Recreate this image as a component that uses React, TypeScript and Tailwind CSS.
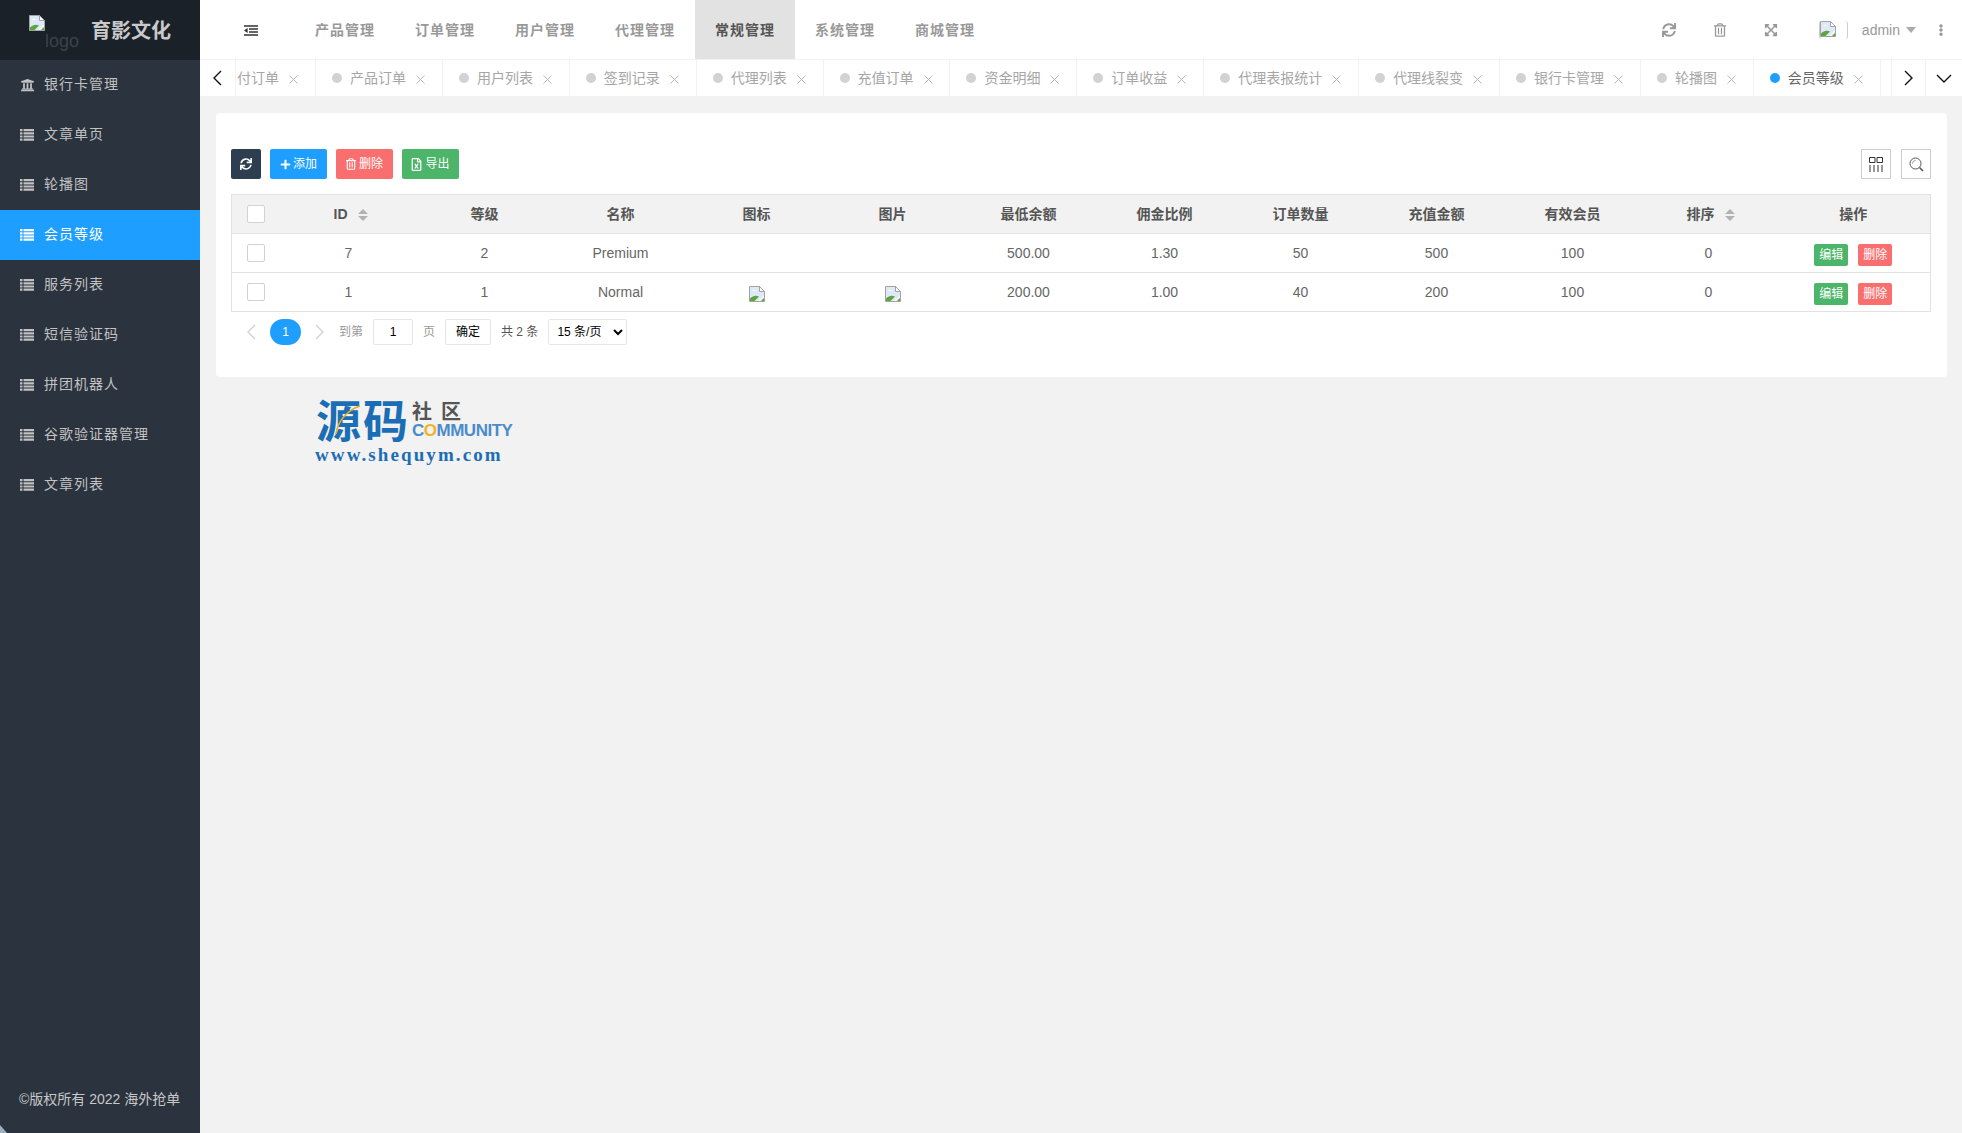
import { FaUniversity, FaSync, FaRegTrashAlt, FaExpandArrowsAlt, FaEllipsisV, FaPlus, FaRegFileExcel } from "react-icons/fa";

const menu = [
  { name: "银行卡管理", bank: true },
  { name: "文章单页" },
  { name: "轮播图" },
  { name: "会员等级", active: true },
  { name: "服务列表" },
  { name: "短信验证码" },
  { name: "拼团机器人" },
  { name: "谷歌验证器管理" },
  { name: "文章列表" },
];
const navs = ["产品管理", "订单管理", "用户管理", "代理管理", "常规管理", "系统管理", "商城管理"];
const tabs = ["产品订单", "用户列表", "签到记录", "代理列表", "充值订单", "资金明细", "订单收益", "代理表报统计", "代理线裂变", "银行卡管理", "轮播图", "会员等级"];
const heads = ["ID", "等级", "名称", "图标", "图片", "最低余额", "佣金比例", "订单数量", "充值金额", "有效会员", "排序", "操作"];
const rows = [
  { id: 7, level: 2, name: "Premium", pic: false, min: "500.00", rate: "1.30", orders: 50, charge: 500, members: 100, sort: 0 },
  { id: 1, level: 1, name: "Normal", pic: true, min: "200.00", rate: "1.00", orders: 40, charge: 200, members: 100, sort: 0 },
];

function BrokenImage() {
  return (
    <svg width="16" height="16" viewBox="0 0 16 16" className="inline-block shrink-0">
      <path d="M0.5 0.5H10.5L15.5 5.5V15.5H0.5Z" fill="#dfe8f6" stroke="#a3a3a3" />
      <path d="M10.5 0.5V5.5H15.5Z" fill="#fff" stroke="#a3a3a3" />
      <path d="M3 5c1-1.5 3-1.5 4 0H3Z" fill="#fff" />
      <path d="M1 15V12.5C4 9.5 7 9 10 10.5L5.5 15Z" fill="#5aa63a" />
      <path d="M9 15L15 9.5V11L11 15Z" fill="#fff" />
      <path d="M12 15L15 12V15Z" fill="#5aa63a" />
    </svg>
  );
}

function ListIcon() {
  return (
    <svg width="14" height="12" viewBox="0 0 14 12" className="shrink-0">
      <path d="M0 0H2.5V2.2H0ZM3.5 0H14V2.2H3.5ZM0 3.2H2.5V5.4H0ZM3.5 3.2H14V5.4H3.5ZM0 6.4H2.5V8.6H0ZM3.5 6.4H14V8.6H3.5ZM0 9.6H2.5V11.8H0ZM3.5 9.6H14V11.8H3.5Z" fill="currentColor" />
    </svg>
  );
}

function SortCaret() {
  return (
    <span className="inline-flex flex-col gap-[2px] ml-[10px] align-middle">
      <span className="w-0 h-0 border-x-[5px] border-x-transparent border-b-[5px] border-b-[#b2b2b2]" />
      <span className="w-0 h-0 border-x-[5px] border-x-transparent border-t-[5px] border-t-[#b2b2b2]" />
    </span>
  );
}

function Chevron({ dir, className }: { dir: "left" | "right" | "down"; className?: string }) {
  const d = dir === "left" ? "M9 1L2 8L9 15" : dir === "right" ? "M2 1L9 8L2 15" : "M1 2L8 9L15 2";
  return (
    <svg width={dir === "down" ? 16 : 11} height={dir === "down" ? 11 : 16} viewBox={dir === "down" ? "0 0 16 11" : "0 0 11 16"} className={className}>
      <path d={d} fill="none" stroke="currentColor" strokeWidth="1.4" />
    </svg>
  );
}

function TabClose() {
  return (
    <svg width="9" height="9" viewBox="0 0 9 9" className="ml-[10px] mt-[2px] shrink-0">
      <path d="M0.5 0.5L8.5 8.5M8.5 0.5L0.5 8.5" stroke="#b8b8b8" strokeWidth="1" />
    </svg>
  );
}

function Sidebar() {
  return (
    <aside className="w-[200px] shrink-0 bg-[#2a333e] flex flex-col text-[#c2c2c2] text-[14px] relative">
      <div className="h-[60px] bg-[#1b2129] flex">
        <div className="w-[91px] pl-[29px] pt-[12px] relative">
          <BrokenImage />
          <span className="absolute left-[45px] top-[31px] text-[#3b424c] text-[18px] leading-[20px]">logo</span>
        </div>
        <span className="text-[20px] font-bold text-[#c9c9c9] leading-[62px]">育影文化</span>
      </div>
      {menu.map((m) => (
        <div key={m.name} className={`h-[50px] flex items-center pl-[20px] tracking-[1px] ${m.active ? "bg-[#1e9fff] text-white" : ""}`}>
          {m.bank ? <FaUniversity className="w-[15px] h-[14px]" /> : <ListIcon />}
          <span className={`-mt-[2px] ${m.bank ? "ml-[9px]" : "ml-[10px]"}`}>{m.name}</span>
        </div>
      ))}
      <div className="mt-auto h-[70px] pl-[19px] pt-[26px] text-[14px] leading-[20px] text-[#c8c8c8]">©版权所有 2022 海外抢单</div>
      {/* corner artefact in the bottom left */}
      <svg width="7" height="8" viewBox="0 0 7 8" className="absolute left-0 bottom-0">
        <path d="M0 0L7 8H0Z" fill="#9fb0c0" />
      </svg>
    </aside>
  );
}

function Header() {
  return (
    <header className="h-[60px] bg-white flex items-stretch">
      <div className="w-[95px] flex items-center pl-[44px]">
        <svg width="14" height="11" viewBox="0 0 14 11">
          <path d="M0 1H14M5 4H14M5 7H14M0 10H14" stroke="#333" strokeWidth="1.7" />
          <path d="M3.6 3V8L0 5.5Z" fill="#333" />
        </svg>
      </div>
      {navs.map((n) => (
        <div
          key={n}
          className={`w-[100px] flex items-center justify-center text-[14px] tracking-[1px] font-semibold ${n === "常规管理" ? "bg-[#e2e2e2] text-[#555]" : "text-[#999]"}`}
        >
          {n}
        </div>
      ))}
      <div className="ml-auto flex items-center text-[#999] pr-[15px]">
        <FaSync className="w-[14px] h-[14px]" />
        <FaRegTrashAlt className="w-[12px] h-[14px] ml-[38px]" />
        <FaExpandArrowsAlt className="w-[14px] h-[14px] ml-[38px]" />
        <span className="ml-[41px] w-[29px] h-[18px] border-x border-[#ccc] flex rounded-[3px]">
          <BrokenImage />
        </span>
        <span className="ml-[14px] text-[14px] leading-none">admin</span>
        <span className="ml-[6px] w-0 h-0 border-x-[5px] border-x-transparent border-t-[6px] border-t-[#aaa]" />
        <FaEllipsisV className="w-[12px] h-[12px] ml-[19px]" />
      </div>
    </header>
  );
}

function TabBar() {
  return (
    <div className="h-[36px] bg-white border-y border-[#f2f2f2] flex text-[14px] text-[#a6a6a6] box-content -mt-px">
      <div className="w-[36px] shrink-0 flex items-center justify-center border-r border-[#f2f2f2] text-[#111]">
        <Chevron dir="left" />
      </div>
      <div className="flex-1 flex min-w-0 overflow-hidden">
        <div className="w-[80px] shrink-0 flex items-center pl-[1px] border-r border-[#f2f2f2]">
          <span>付订单</span>
          <TabClose />
        </div>
        {tabs.map((t, i) => {
          const on = i === tabs.length - 1;
          return (
            <div key={t} className="shrink-0 flex items-center pl-[16px] pr-[16.9px] border-r border-[#f2f2f2]">
              <span className={`w-[10px] h-[10px] rounded-full mr-[8px] ${on ? "bg-[#1e9fff]" : "bg-[#d2d2d2]"}`} />
              <span className={on ? "text-[#666]" : ""}>{t}</span>
              <TabClose />
            </div>
          );
        })}
      </div>
      <div className="w-[35px] shrink-0 flex items-center justify-center border-x border-[#f2f2f2] text-[#111]">
        <Chevron dir="right" />
      </div>
      <div className="w-[36px] shrink-0 flex items-center justify-center text-[#111]">
        <Chevron dir="down" />
      </div>
    </div>
  );
}

function Check() {
  return <span className="block mx-auto w-[18px] h-[18px] bg-white border border-[#d2d2d2] rounded-[2px]" />;
}

function OpButton({ color, children }: { color: string; children: string }) {
  return <span className={`inline-block w-[34px] h-[22px] leading-[22px] text-center text-[12px] text-white rounded-[2px] ${color}`}>{children}</span>;
}

function Logo() {
  return (
    <div className="ml-[100px] mt-[23px] w-[210px] relative">
      <div className="flex">
        <span className="text-[45px] leading-[45px] font-bold text-[#1b6db5] tracking-[2px]">源码</span>
        <div className="ml-[2px] pt-[1px]">
          <div className="text-[20px] leading-[22px] font-bold text-[#555] tracking-[9px]">社区</div>
          <div className="text-[17px] leading-[16px] tracking-[-0.5px] font-semibold text-[#4a8ccb] font-['Liberation_Sans',sans-serif]">
            C<span className="text-[#f0b429]">O</span>MMUNITY
          </div>
        </div>
      </div>
      <svg width="30" height="34" viewBox="0 0 30 34" className="absolute left-[18px] top-[4px]">
        <path d="M2 30C4 16 14 6 26 2" fill="none" stroke="#e8a92c" strokeWidth="1.6" />
      </svg>
      <div className="font-['Liberation_Serif',serif] font-bold text-[19px] leading-[22px] tracking-[2.1px] text-[#1b6db5] -ml-[1px] -mt-[1px] whitespace-nowrap">www.shequym.com</div>
    </div>
  );
}

export default function App() {
  return (
    <div className="flex h-[1133px] overflow-hidden bg-[#f2f2f2] font-['Liberation_Sans','Noto_Sans_CJK_SC',sans-serif]">
      <Sidebar />
      <main className="flex-1 min-w-0 flex flex-col">
        <Header />
        <TabBar />
        <div className="pl-[16px] pr-[15px] pt-[16px]">
          <div className="bg-white rounded-[4px] h-[264px] pl-[15px] pr-[16px] pt-[36px]">
            {/* toolbar */}
            <div className="flex h-[30px] text-[12px] text-white">
              <span className="w-[30px] bg-[#2c3e50] rounded-[2px] flex items-center justify-center">
                <FaSync className="w-[12px] h-[12px]" />
              </span>
              <span className="ml-[9px] w-[57px] bg-[#1e9fff] rounded-[2px] flex items-center justify-center gap-[2px]">
                <FaPlus className="w-[11px] h-[11px]" />
                添加
              </span>
              <span className="ml-[9px] w-[57px] bg-[#f96f6f] rounded-[2px] flex items-center justify-center gap-[3px]">
                <FaRegTrashAlt className="w-[10px] h-[12px]" />
                删除
              </span>
              <span className="ml-[9px] w-[57px] bg-[#4cb569] rounded-[2px] flex items-center justify-center gap-[3px]">
                <FaRegFileExcel className="w-[11px] h-[13px]" />
                导出
              </span>
              <span className="ml-auto w-[30px] border border-[#ccc] flex items-center justify-center">
                <svg width="14" height="15" viewBox="0 0 14 15">
                  <path d="M0.5 0.5H6V5.5H0.5ZM8 0.5H13.5V5.5H8ZM1 8V15M5 8V15M9 8V15M13 8V15" fill="none" stroke="#333" />
                </svg>
              </span>
              <span className="ml-[10px] w-[30px] border border-[#ccc] flex items-center justify-center">
                <svg width="15" height="15" viewBox="0 0 15 15">
                  <circle cx="6.5" cy="6.5" r="5.5" fill="none" stroke="#555" />
                  <path d="M3.5 6.5A3 3 0 0 1 6.5 3.5" fill="none" stroke="#999" />
                  <path d="M10.5 10.5L14 14" stroke="#555" strokeWidth="1.6" />
                </svg>
              </span>
            </div>

            <table className="mt-[15px] w-[1700px] table-fixed border border-[#e2e2e2] text-[14px] text-[#666] text-center">
              <colgroup>
                <col className="w-[49px]" />
                {heads.slice(0, 11).map((h) => (
                  <col key={h} className="w-[136px]" />
                ))}
                <col />
              </colgroup>
              <thead>
                <tr className="h-[39px] bg-[#f2f2f2] text-[#555] font-bold">
                  <th>
                    <Check />
                  </th>
                  {heads.map((h) => (
                    <th key={h} className={h === "ID" || h === "排序" ? "pl-[4px]" : ""}>
                      {h}
                      {(h === "ID" || h === "排序") && <SortCaret />}
                    </th>
                  ))}
                </tr>
              </thead>
              <tbody>
                {rows.map((r) => (
                  <tr key={r.id} className="h-[39px] border-t border-[#e2e2e2]">
                    <td>
                      <Check />
                    </td>
                    <td>{r.id}</td>
                    <td>{r.level}</td>
                    <td>{r.name}</td>
                    <td>{r.pic && <span className="block h-[16px] -mt-[2px]"><BrokenImage /></span>}</td>
                    <td>{r.pic && <span className="block h-[16px] -mt-[2px]"><BrokenImage /></span>}</td>
                    <td>{r.min}</td>
                    <td>{r.rate}</td>
                    <td>{r.orders}</td>
                    <td>{r.charge}</td>
                    <td>{r.members}</td>
                    <td>{r.sort}</td>
                    <td>
                      <div className="flex justify-center gap-[10px] pt-[4px]">
                        <OpButton color="bg-[#4cb569]">编辑</OpButton>
                        <OpButton color="bg-[#f96f6f]">删除</OpButton>
                      </div>
                    </td>
                  </tr>
                ))}
              </tbody>
            </table>

            {/* pagination */}
            <div className="mt-[7px] h-[26px] flex items-center text-[12px] text-[#999] pl-[15px]">
              <span className="text-[#d2d2d2]"><Chevron dir="left" /></span>
              <span className="ml-[13px] w-[31px] h-[26px] leading-[26px] text-center rounded-full bg-[#1e9fff] text-white">1</span>
              <span className="ml-[13px] text-[#d2d2d2]"><Chevron dir="right" /></span>
              <span className="ml-[14px]">到第</span>
              <span className="ml-[10px] w-[40px] h-[26px] leading-[24px] text-center border border-[#e6e6e6] rounded-[2px] text-[#000]">1</span>
              <span className="ml-[10px]">页</span>
              <span className="ml-[10px] w-[46px] h-[26px] leading-[24px] text-center border border-[#e6e6e6] rounded-[2px] text-[#000]">确定</span>
              <span className="ml-[10px] text-[#555]">共 2 条</span>
              <select defaultValue="15" className="ml-[10px] w-[79px] h-[26px] border border-[#e6e6e6] rounded-[2px] text-[#000] pl-[4px] bg-white">
                <option value="15">15 条/页</option>
              </select>
            </div>
          </div>
          <Logo />
        </div>
      </main>
    </div>
  );
}
